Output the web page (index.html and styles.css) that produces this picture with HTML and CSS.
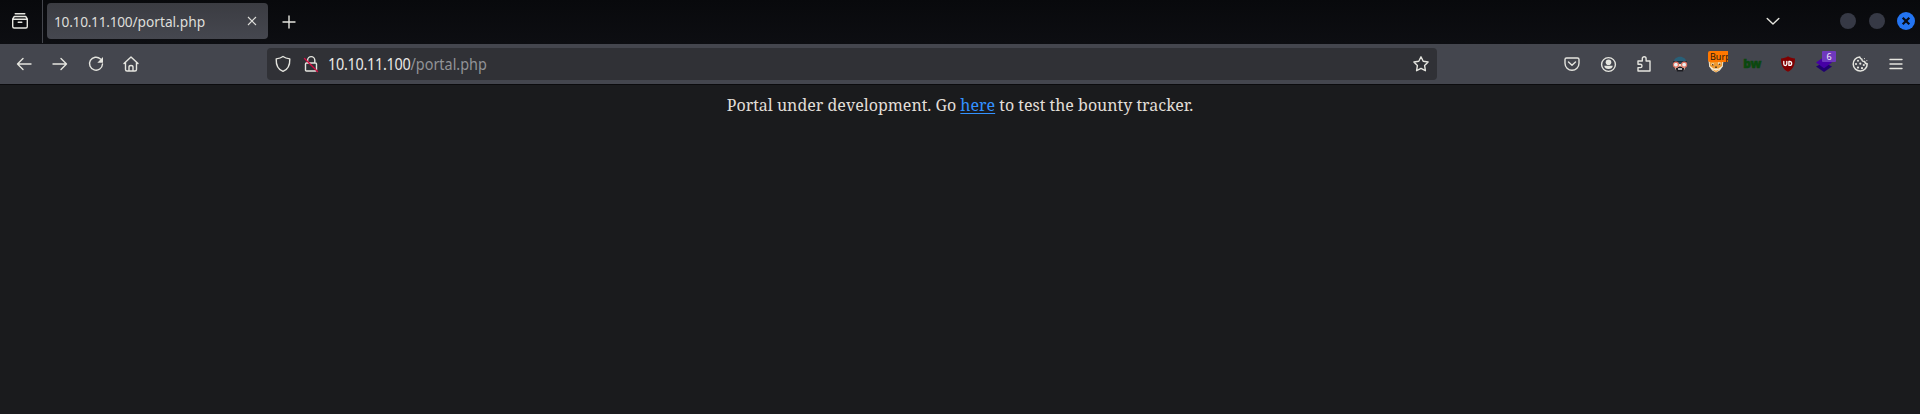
FILE: index.html
```
<!DOCTYPE html>
<html lang="en">
<head>
<meta charset="utf-8">
<title>10.10.11.100/portal.php</title>
<link rel="stylesheet" href="styles.css">
</head>
<body>
<header class="tabbar">
  <div class="recent"><svg class="icon" viewBox="0 0 20 20"><path d="M5.200 2.700h9.600M4.300 5.500h11.400l1.600 2.300v7.700q0 1.500-1.500 1.500H4.200q-1.500 0-1.500-1.500V7.800zM2.700 8.200h14.600M8.200 11.200h3.600"/></svg></div>
  <div class="tab"><span class="tab-title"><span class="host">10.10.11.100</span>/portal.php</span><svg class="close" viewBox="0 0 10 10"><path d="M1 1l8 8M9 1L1 9"/></svg></div>
  <svg class="icon plus" viewBox="0 0 20 20"><path d="M4 10h12M10 4v12"/></svg>
  <div class="window-controls">
    <svg class="icon chevron" viewBox="0 0 20 20"><path d="M4.200 7.500L10 13l5.800-5.500"/></svg>
    <span class="dot"></span><span class="dot"></span>
    <span class="dot dot-close"><svg viewBox="0 0 10 10"><path d="M1.700 1.700l6.600 6.600M8.300 1.700L1.700 8.300"/></svg></span>
  </div>
</header>
<nav class="toolbar">
  <div class="nav-icons">
    <svg class="icon" viewBox="0 0 20 20"><path d="M17 10H3.500M9 4.500L3.500 10 9 15.500"/></svg>
    <svg class="icon" viewBox="0 0 20 20"><path d="M3 10h13.500M11 4.500l5.500 5.500-5.500 5.500"/></svg>
    <svg class="icon" viewBox="0 0 20 20"><path d="M14.500 5A6.500 6.500 0 1 0 16.500 10"/><path class="fill" d="M17 3v5.700h-5.700z"/></svg>
    <svg class="icon home" viewBox="0 0 20 20"><path d="M3 9.600L10 3l7 6.600M4.500 8.500v7q0 1.500 1.500 1.500h8q1.500 0 1.500-1.500v-7M8 17v-4q0-1.500 2-1.500t2 1.500v4"/></svg>
  </div>
  <div class="urlbar">
    <svg class="icon" viewBox="0 0 20 20"><path d="M10 2.500C8 4 5.500 4.600 3.200 4.900C3 10.500 4.800 15.300 10 17.400C15.200 15.300 17 10.500 16.800 4.900C14.500 4.600 12 4 10 2.500z"/></svg>
    <svg class="icon lock" viewBox="0 0 20 20"><path d="M6.600 8.500V6.200a3.600 3.600 0 0 1 7.200 0v2.300M5.500 9h9q1 0 1 1v6q0 1-1 1h-9q-1 0-1-1v-6q0-1 1-1z"/><path class="slash" d="M3.500 4.500l13 13"/></svg>
    <span class="url"><span class="host">10.10.11.100</span><span class="path">/portal.php</span></span>
    <svg class="icon star" viewBox="0 0 20 20"><path d="M10 2.800l2.200 4.500 4.900.7-3.500 3.500.8 5.200L10 14.400l-4.400 2.300.8-5.200L2.900 8l4.900-.7z"/></svg>
  </div>
  <div class="extensions">
    <svg class="icon" viewBox="0 0 20 20"><path d="M4.500 4h11q1.500 0 1.500 1.500v3.700a7 7 0 0 1-14 0V5.500Q3 4 4.500 4zM6.500 8l3.500 3.300L13.500 8"/></svg>
    <svg class="icon" viewBox="0 0 20 20"><circle cx="10.500" cy="10.500" r="6.900"/><circle class="fill" cx="10.500" cy="8.200" r="2.800"/><path class="fill" d="M6.200 11.800h8.600q-.6 3.300-4.300 3.300t-4.300-3.300z"/></svg>
    <svg class="icon" viewBox="0 0 20 20"><path d="M4 7h4.300V4.700a1.900 1.900 0 0 1 3.800 0V7H16v10H4v-3.400h2.300a1.700 1.700 0 0 0 0-3.400H4z"/></svg>
    <svg class="icon art" viewBox="0 0 20 20"><path fill="#286078" d="M3.500 9C3.500 .5 16.500 .5 16.500 9z"/><path fill="#222c35" d="M3 7h14v1.500H3z"/><path fill="#ffd2b8" d="M5 10h10v5L12.500 17h-5L5 15z"/><path fill="#1c1d22" d="M5.500 14.500l3.500-2h2l3.500 2-1.500 3H7z"/><path fill="#eee" d="M8 14.300h4v1.400H8z"/><g fill="#e9efef" stroke="#e0705f" stroke-width="1.200"><circle cx="5.900" cy="10.700" r="2.500"/><circle cx="14.100" cy="10.700" r="2.500"/></g></svg>
    <div class="badged">
      <svg class="icon art" viewBox="0 0 20 20"><path fill="#f4ead4" d="M2.500 6h15l-.7 6.500-3 4-3.800 2-3.800-2-3-4z"/><path fill="#ef9a32" d="M3.500 6h13l-.5 6-3.500 2.500h-5L4 12z"/><path fill="#ef9a32" d="M6 15.200l4 1.500 4-1.500-4 3z"/><path fill="#fff6df" d="M5.500 9.500h2.500V11H5.500zM12 8.500h2.500v2H12z"/><path fill="#624322" d="M6 10h1.500v1.500H6zM12.700 9.500h1.500V11h-1.500zM9 12.500h2V14H9z"/></svg>
      <span class="badge badge-burp">Burp</span>
    </div>
    <span class="bw">bw</span>
    <svg class="icon art" viewBox="0 0 20 20"><path fill="#800000" d="M10 2.200c2 1.500 4.500 2 7 2.200 0 6.800-1.600 10.400-7 13.300C4.600 14.800 3 11.200 3 4.400c2.500-.2 5-.7 7-2.200z"/><path fill="none" stroke="#fff" stroke-width="1.300" d="M5.800 7.500V10a1.500 1.500 0 0 0 3 0V7.500M10.900 7.500v3.900h.8a1.900 1.900 0 0 0 0-3.900z"/></svg>
    <div class="badged">
      <svg class="icon art" viewBox="0 0 20 20"><path fill="#210070" d="M2 12.500l8-4 8 4-8 5.500z"/><path fill="#4600a5" d="M2 8.500L10 3l8 5.500-8 5.800z"/></svg>
      <span class="badge badge-count">6</span>
    </div>
    <svg class="icon cookie" viewBox="0 0 20 20"><path d="M9.800 3A7 7 0 1 0 17.200 9.800Q14.800 9.800 14.600 7.400Q11.800 7.600 11.900 5.300Q10.100 4.900 9.800 3z"/><g class="fill"><circle cx="8" cy="6.700" r="1"/><circle cx="6" cy="10" r="1.100"/><circle cx="10.300" cy="9.700" r="1.100"/><circle cx="13.800" cy="11" r="1.100"/><circle cx="8" cy="13.600" r="1.100"/><circle cx="12" cy="14.200" r="1.100"/></g><path class="crumb" d="M14.500 4.600h.1M16.800 6.600h.1"/></svg>
    <svg class="icon" viewBox="0 0 20 20"><path d="M4 5.500h12M4 10h12M4 14.500h12"/></svg>
  </div>
</nav>
<main class="page">Portal under development. Go <a class="link" href="#">here</a> to test the bounty tracker.</main>
</body>
</html>
```

FILE: styles.css
```
* { box-sizing: border-box; }
body { margin: 0; height: 414px; overflow: hidden; background: #1a1b1d; font-family: "Noto Sans", sans-serif; }
.icon { display: block; flex: none; width: 20px; height: 20px; fill: none; stroke: #e5e5df; stroke-width: 1.4; stroke-linecap: round; stroke-linejoin: round; }
.icon .fill { fill: #e5e5df; stroke: none; }
.icon.art { stroke: none; }
.tabbar { display: flex; height: 44px; background: linear-gradient(#08090c, #0d0e12); }
.recent { width: 43px; height: 43px; padding: 11px 0 0 10px; border-right: 1px solid #44464d; }
.tab { display: flex; align-items: center; justify-content: space-between; width: 221px; height: 36px; margin: 3px 0 0 4px; padding: 0 11px 0 7px; border-radius: 4px; background: linear-gradient(#3b3c42, #45474f); color: #dededa; font-size: 15px; }
.tab-title { line-height: 36px; white-space: nowrap; transform: scaleX(0.915); transform-origin: left; }
.host { letter-spacing: -0.3px; }
.close { width: 10px; height: 10px; fill: none; stroke: #dededa; stroke-width: 1.1; }
.plus { margin: 12px 0 0 11px; }
.window-controls { display: flex; align-items: center; height: 42px; margin-left: auto; padding-right: 5px; }
.chevron { margin-right: 57px; }
.dot { width: 16px; height: 16px; margin-right: 13px; border-radius: 50%; background: #363945; }
.dot-close { display: flex; align-items: center; justify-content: center; width: 18px; height: 18px; margin: 0 0 0 -1px; background: #2374f2; }
.dot-close svg { width: 10px; height: 10px; stroke: #080c16; stroke-width: 2.2; }
.toolbar { display: flex; align-items: center; height: 41px; border-bottom: 1px solid #0c0c0e; background: #44464e; }
.nav-icons { display: flex; gap: 16px; width: 267px; padding-left: 14px; }
.home { margin-left: -1px; }
.urlbar { display: flex; align-items: center; width: 1170px; height: 32px; padding: 0 6px; border-radius: 4px; background: #303136; }
.lock { margin-left: 8px; }
.icon .slash { stroke: #d60b42; }
.url { margin-left: 7px; padding-top: 1px; color: #e9e9e6; font-size: 16px; line-height: 31px; white-space: nowrap; transform: scaleX(0.9); transform-origin: left; }
.path { color: #929397; }
.star { margin-left: auto; }
.extensions { display: flex; align-items: center; gap: 16px; margin-left: auto; padding-right: 14px; }
.badged { position: relative; width: 20px; height: 20px; }
.badge { position: absolute; overflow: hidden; }
.badge-burp { top: -3px; left: 2px; width: 20px; height: 11px; padding-left: 2px; border-radius: 2px 0 0 2px; background: #ff7800; color: #25170b; font-size: 9px; line-height: 11px; }
.badge-count { top: -3px; left: 8px; width: 14px; height: 11px; border-radius: 1px; background: #6f38bd; color: #f1eafa; font-size: 9px; line-height: 11px; text-align: center; }
.bw { display: flex; justify-content: center; width: 20px; color: #0b480f; font: 900 12px/20px "Open Sans", "Noto Sans", sans-serif; letter-spacing: -0.5px; -webkit-text-stroke: 0.5px #0b480f; }
.cookie { stroke-width: 1.5; }
.crumb { stroke-width: 1; }
.page { padding-top: 8px; color: #e1ded8; font-family: "Noto Serif", "Droid Serif", "DejaVu Serif Condensed", "DejaVu Serif", serif; font-size: 16px; line-height: 24px; text-align: center; }
.link { color: #3391ff; text-underline-offset: 2px; }
```
